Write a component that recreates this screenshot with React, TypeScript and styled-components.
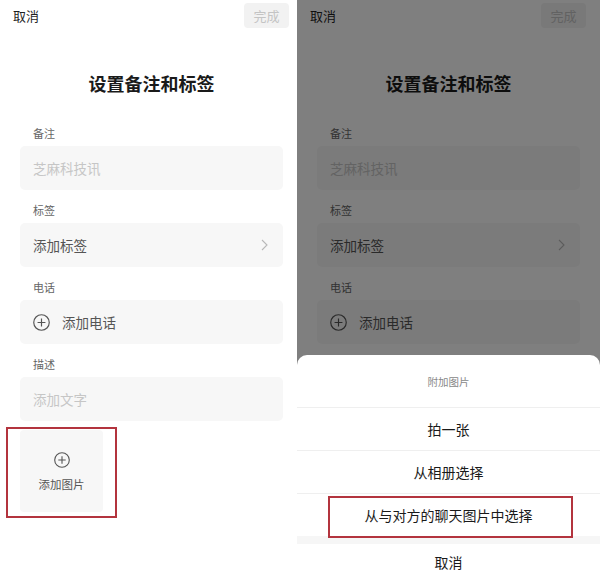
import React from "react";
import styled, { createGlobalStyle } from "styled-components";

const Global = createGlobalStyle`
  html, body { margin: 0; padding: 0; background: #fff; }
  body { font-family: "Noto Sans CJK SC", "Noto Sans", sans-serif; }
  * { box-sizing: border-box; }
`;

const Page = styled.div`
  display: flex;
  width: 600px;
  height: 577px;
  overflow: hidden;
`;

const Phone = styled.div<{ $w: number }>`
  position: relative;
  flex: none;
  width: ${(p) => p.$w}px;
  height: 577px;
  background: #fff;
  overflow: hidden;
  display: flex;
  flex-direction: column;
`;

const TopBar = styled.div`
  display: flex;
  align-items: center;
  justify-content: space-between;
  margin-left: 13px;
  width: 276px;
  height: 31px;
`;

const CancelLink = styled.span`
  font-size: 13px;
  line-height: 18px;
  color: #1f1f1f;
  margin-top: 1px;
`;

const DoneButton = styled.span`
  width: 45px;
  height: 25px;
  border-radius: 4px;
  background: #f2f2f2;
  color: #c4c4c4;
  font-size: 13px;
  display: flex;
  align-items: center;
  justify-content: center;
`;

const Content = styled.div`
  margin-left: 20px;
  width: 263px;
  display: flex;
  flex-direction: column;
`;

const Title = styled.h1`
  margin: 39px 0 17px;
  font-size: 18px;
  line-height: 26px;
  font-weight: 600;
  color: #1a1a1a;
  text-align: center;
`;

const Field = styled.div`
  display: flex;
  flex-direction: column;
`;

const Label = styled.div`
  height: 33px;
  padding: 0 0 5px 13px;
  display: flex;
  align-items: flex-end;
  font-size: 11px;
  line-height: 16px;
  color: #666;
`;

const InputBox = styled.div<{ $placeholder?: boolean }>`
  height: 44px;
  border-radius: 5px;
  background: #f7f7f7;
  display: flex;
  align-items: center;
  gap: 12px;
  padding: 0 15px 0 13px;
  font-size: 13.5px;
  color: ${(p) => (p.$placeholder ? "#c6c6c6" : "#555")};
`;

const Chevron = styled.svg`
  margin-left: auto;
`;

const ImageSlot = styled.div`
  position: relative;
  margin-top: 9px;
  width: 83px;
  height: 82px;
  border-radius: 4px;
  background: #f7f7f7;
  display: flex;
  flex-direction: column;
  align-items: center;
  padding-top: 22px;
  gap: 8px;
  font-size: 11.5px;
  line-height: 16px;
  color: #555;
`;

const Highlight = styled.div<{ $l: number; $t: number; $w: number; $h: number }>`
  position: absolute;
  left: ${(p) => p.$l}px;
  top: ${(p) => p.$t}px;
  width: ${(p) => p.$w}px;
  height: ${(p) => p.$h}px;
  border: 2px solid #b3343e;
  pointer-events: none;
`;

const Dim = styled.div`
  position: absolute;
  inset: 0;
  background: rgba(0, 0, 0, 0.5);
`;

const Sheet = styled.div`
  position: absolute;
  left: 0;
  right: 0;
  top: 355px;
  bottom: 0;
  background: #fff;
  border-radius: 10px 10px 0 0;
  display: flex;
  flex-direction: column;
`;

const SheetHeader = styled.div`
  height: 52px;
  flex: none;
  display: flex;
  align-items: center;
  justify-content: center;
  font-size: 10.5px;
  color: #888;
`;

const SheetRow = styled.div`
  position: relative;
  height: 43px;
  flex: none;
  border-top: 1px solid #efefef;
  display: flex;
  align-items: center;
  justify-content: center;
  font-size: 14px;
  color: #1a1a1a;
`;

const SheetGap = styled.div`
  height: 8px;
  flex: none;
  background: #f6f6f6;
`;

const SheetCancel = styled.div`
  height: 36px;
  flex: none;
  display: flex;
  align-items: center;
  justify-content: center;
  font-size: 14px;
  color: #1a1a1a;
`;

const PlusCircle = ({ size = 16 }: { size?: number }) => (
  <svg width={size} height={size} viewBox="0 0 16 16" fill="none">
    <circle cx="8" cy="8" r="7.3" stroke="#555" strokeWidth="1.1" />
    <path d="M8 4.3v7.4M4.3 8h7.4" stroke="#555" strokeWidth="1.1" />
  </svg>
);

const Screen = ({ highlightImage }: { highlightImage?: boolean }) => (
  <>
    <TopBar>
      <CancelLink>取消</CancelLink>
      <DoneButton>完成</DoneButton>
    </TopBar>
    <Content>
      <Title>设置备注和标签</Title>
      <Field>
        <Label>备注</Label>
        <InputBox $placeholder>芝麻科技讯</InputBox>
      </Field>
      <Field>
        <Label>标签</Label>
        <InputBox>
          添加标签
          <Chevron width="7" height="12" viewBox="0 0 7 12" fill="none">
            <path d="M1 1l5 5-5 5" stroke="#b8b8b8" strokeWidth="1.1" />
          </Chevron>
        </InputBox>
      </Field>
      <Field>
        <Label>电话</Label>
        <InputBox>
          <PlusCircle size={17} />
          添加电话
        </InputBox>
      </Field>
      <Field>
        <Label>描述</Label>
        <InputBox $placeholder>添加文字</InputBox>
      </Field>
      <ImageSlot>
        <PlusCircle />
        添加图片
        {highlightImage && <Highlight $l={-14} $t={-3} $w={111} $h={91} />}
      </ImageSlot>
    </Content>
  </>
);

export default function App() {
  return (
    <>
      <Global />
      <Page>
        <Phone $w={297}>
          <Screen highlightImage />
        </Phone>
        <Phone $w={303}>
          <Screen />
          <Dim />
          <Sheet>
            <SheetHeader>附加图片</SheetHeader>
            <SheetRow>拍一张</SheetRow>
            <SheetRow>从相册选择</SheetRow>
            <SheetRow>
              从与对方的聊天图片中选择
              <Highlight $l={31} $t={2} $w={245} $h={42} />
            </SheetRow>
            <SheetGap />
            <SheetCancel>取消</SheetCancel>
          </Sheet>
        </Phone>
      </Page>
    </>
  );
}
